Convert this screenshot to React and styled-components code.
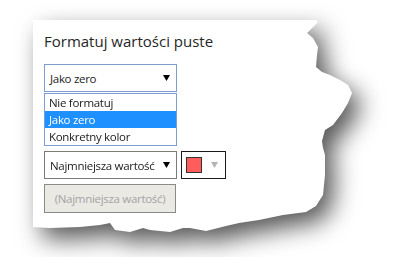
import React from 'react';
import styled, { createGlobalStyle } from 'styled-components';

const GlobalStyle = createGlobalStyle`
    html, body { margin: 0; padding: 0; background: #ffffff; }
    body { width: 412px; height: 257px; overflow: hidden; font-family: "Open Sans", "Noto Sans", sans-serif; }
`;

const tornEdge = [
    [0, 0], [283, 0], [285, 2], [274, 13], [280, 18], [285, 27], [284, 35], [283, 47],
    [289, 52], [297, 55], [307, 60], [315, 65], [319, 73], [315, 83], [309, 93],
    [300, 105], [292, 110], [289, 121], [290, 128], [292, 135], [292, 155], [290, 175],
    [283, 186], [273, 192], [250, 195], [226, 200], [206, 203], [193, 206], [173, 211],
    [157, 208], [150, 208], [137, 212], [117, 210], [110, 208], [97, 212], [82, 210],
    [77, 203], [67, 205], [47, 207], [17, 208], [0, 207]
].map(([x, y]) => `${x}px ${y}px`).join(', ');

const Shadow = styled.div`
    margin: 20px 0 0 33px;
    width: 320px;
    filter: drop-shadow(9px 11px 12px rgba(0, 0, 0, 0.66));
`;

const Paper = styled.div`
    width: 320px;
    height: 213px;
    background: #ffffff;
    clip-path: polygon(${tornEdge});
    box-sizing: border-box;
    padding: 11px 0 0 11px;
    display: flex;
    flex-direction: column;
    align-items: flex-start;
`;

const Title = styled.div`
    font-size: 15px;
    line-height: 20px;
    color: #262626;
    margin-bottom: 13px;
`;

const SelectBox = styled.div`
    box-sizing: border-box;
    width: 133px;
    height: 28px;
    border: 1px solid ${p => p.$border || '#7a7a7a'};
    background: #ffffff;
    display: flex;
    align-items: center;
    justify-content: space-between;
    padding: 0 6px 0 5px;
    font-size: 11.5px;
    letter-spacing: -0.3px;
    color: #1b1b1b;
    white-space: nowrap;
`;

const Arrow = ({ color = '#000' }) => (
    <svg width="7" height="6" viewBox="0 0 7 6">
        <polygon points="0,0 7,0 3.5,6" fill={color} />
    </svg>
);

const List = styled.div`
    box-sizing: border-box;
    width: 133px;
    margin-top: 1px;
    border: 1px solid #7d9fd4;
    background: #ffffff;
`;

const Option = styled.div`
    height: 17px;
    line-height: 17px;
    padding-left: 4px;
    font-size: 11.5px;
    letter-spacing: -0.3px;
    color: ${p => (p.$active ? '#ffffff' : '#1b1b1b')};
    background: ${p => (p.$active ? '#1e90ff' : 'transparent')};
`;

const Row = styled.div`
    display: flex;
    gap: 4px;
    margin-top: 5px;
`;

const ColorPicker = styled.div`
    box-sizing: border-box;
    width: 45px;
    height: 28px;
    border: 1px solid #1a1a1a;
    display: flex;
    align-items: center;
    padding-left: 4px;
    gap: 9px;
`;

const Swatch = styled.div`
    box-sizing: border-box;
    width: 16px;
    height: 16px;
    border: 1px solid #333333;
    background: ${p => p.$color};
`;

const Button = styled.button`
    box-sizing: border-box;
    margin-top: 5px;
    width: 132px;
    height: 29px;
    border: 1px solid #8a8a8a;
    border-radius: 0;
    background: #ebe9e3;
    color: #a3a3a3;
    font-family: inherit;
    font-size: 11.5px;
    letter-spacing: -0.3px;
    padding: 0;
`;

export default function App() {
    return (
        <>
            <GlobalStyle />
            <Shadow>
                <Paper>
                    <Title>Formatuj wartości puste</Title>
                    <SelectBox $border="#7c9cd2">
                        <span>Jako zero</span>
                        <Arrow />
                    </SelectBox>
                    <List>
                        <Option>Nie formatuj</Option>
                        <Option $active>Jako zero</Option>
                        <Option>Konkretny kolor</Option>
                    </List>
                    <Row>
                        <SelectBox>
                            <span>Najmniejsza wartość</span>
                            <Arrow />
                        </SelectBox>
                        <ColorPicker>
                            <Swatch $color="#ff5c5c" />
                            <Arrow color="#b4b4b4" />
                        </ColorPicker>
                    </Row>
                    <Button disabled>(Najmniejsza wartość)</Button>
                </Paper>
            </Shadow>
        </>
    );
}
